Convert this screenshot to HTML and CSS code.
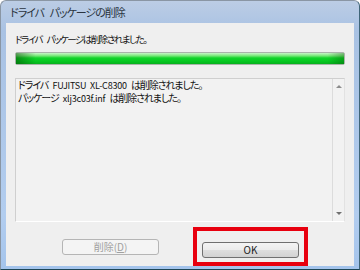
FILE: index.html
```html
<!DOCTYPE html>
<html lang="ja">
<head>
    <meta charset="UTF-8">
    <title>ドライバ パッケージの削除</title>
    <link rel="stylesheet" href="styles.css">
</head>
<body>
    <div class="window">
        <div class="titlebar">ドライバ パッケージの削除</div>
        <div class="client">
            <div class="status">ドライバ パッケージは削除されました。</div>
            <div class="progress"><div class="progress-fill"></div></div>
            <div class="log">
                <div class="log-text">
                    <p>ドライバ <span class="latin">FUJITSU XL-C8300</span> は削除されました。</p>
                    <p>パッケージ <span class="latin">xlj3c03f.inf</span> は削除されました。</p>
                </div>
                <div class="scrollbar">
                    <span class="arrow-up"></span>
                    <span class="arrow-down"></span>
                </div>
            </div>
            <div class="buttons">
                <button class="btn" disabled>削除(<u>D</u>)</button>
                <div class="highlight">
                    <button class="btn btn-ok">OK</button>
                </div>
            </div>
        </div>
    </div>
</body>
</html>
```

FILE: styles.css
```css
body {
    margin: 0;
    background: #ffffff;
    font-family: "Noto Sans CJK JP", "Noto Sans", sans-serif;
    font-feature-settings: "palt";
}
.window {
    width: 360px;
    height: 270px;
    box-sizing: border-box;
    display: flex;
    flex-direction: column;
    border: 1px solid #8a96a4;
    border-bottom-color: #1d4656;
    border-right-color: #3f6578;
    border-radius: 6px 6px 0 0;
    background: linear-gradient(#bccde5, #a9c2e3 30px, #b2cdef 80%, #a4c4ec);
}
.titlebar {
    height: 22px;
    padding-left: 9px;
    font-size: 11px;
    line-height: 22px;
    letter-spacing: -1px;
    word-spacing: 4px;
    color: #2a3440;
}
.client {
    flex: 1;
    margin: 0 5px 5px 5px;
    padding: 9px 9px 0 9px;
    background: #efefef;
    display: flex;
    flex-direction: column;
}
.status {
    font-size: 9.5px;
    line-height: 14px;
    letter-spacing: -1.5px;
    word-spacing: 4px;
    color: #111;
}
.progress {
    margin-top: 6px;
    height: 13px;
    box-sizing: border-box;
    border: 1px solid #a9b3a9;
    border-radius: 2px;
    background: #e6e6e6;
}
.progress-fill {
    height: 100%;
    background:
        linear-gradient(to right, rgba(0, 70, 0, 0.5), rgba(0, 70, 0, 0) 6%, rgba(0, 70, 0, 0) 95%, rgba(0, 70, 0, 0.35)),
        linear-gradient(#c8f5c8, #7ae87a 25%, #12d42a 45%, #06c820 75%, #08b01e);
}
.log {
    margin-top: 13px;
    height: 144px;
    box-sizing: border-box;
    display: flex;
    border: 1px solid #cfcfcf;
    border-right-color: #e2e2e2;
    border-bottom-color: #ffffff;
    background: #f2f2f2;
}
.log-text {
    flex: 1;
    padding: 0 2px;
    font-size: 10px;
    line-height: 12px;
    letter-spacing: -1.1px;
    word-spacing: 3px;
    color: #111;
}
.log-text p {
    margin: 0;
}
.latin {
    font-size: 9px;
    letter-spacing: -0.2px;
    word-spacing: 2px;
}
.scrollbar {
    width: 11px;
    border-left: 1px solid #dcdcdc;
    display: flex;
    flex-direction: column;
    justify-content: space-between;
    align-items: center;
    padding: 6px 0 6px;
}
.arrow-up {
    width: 0;
    height: 0;
    border-left: 3px solid transparent;
    border-right: 3px solid transparent;
    border-bottom: 3px solid #8c8c8c;
}
.arrow-down {
    width: 0;
    height: 0;
    border-left: 3px solid transparent;
    border-right: 3px solid transparent;
    border-top: 3px solid #707070;
}
.buttons {
    margin-top: 5px;
    margin-left: 47px;
    display: flex;
    align-items: center;
    gap: 34px;
}
.btn {
    width: 97px;
    height: 16px;
    padding: 0;
    box-sizing: border-box;
    border: 1px solid #707070;
    border-radius: 3px;
    font-family: "Noto Sans CJK JP", "Noto Sans", sans-serif;
    font-size: 10px;
    line-height: 14px;
    color: #222;
    background: linear-gradient(#f4f4f4, #ececec 50%, #dedede 51%, #d2d2d2);
}
.btn:disabled {
    border-color: #b5b5b5;
    background: #f4f4f4;
    color: #a0a0a0;
}
.highlight {
    border: 4px solid #e8000f;
    padding: 4px 5px 3px 5px;
}
```
